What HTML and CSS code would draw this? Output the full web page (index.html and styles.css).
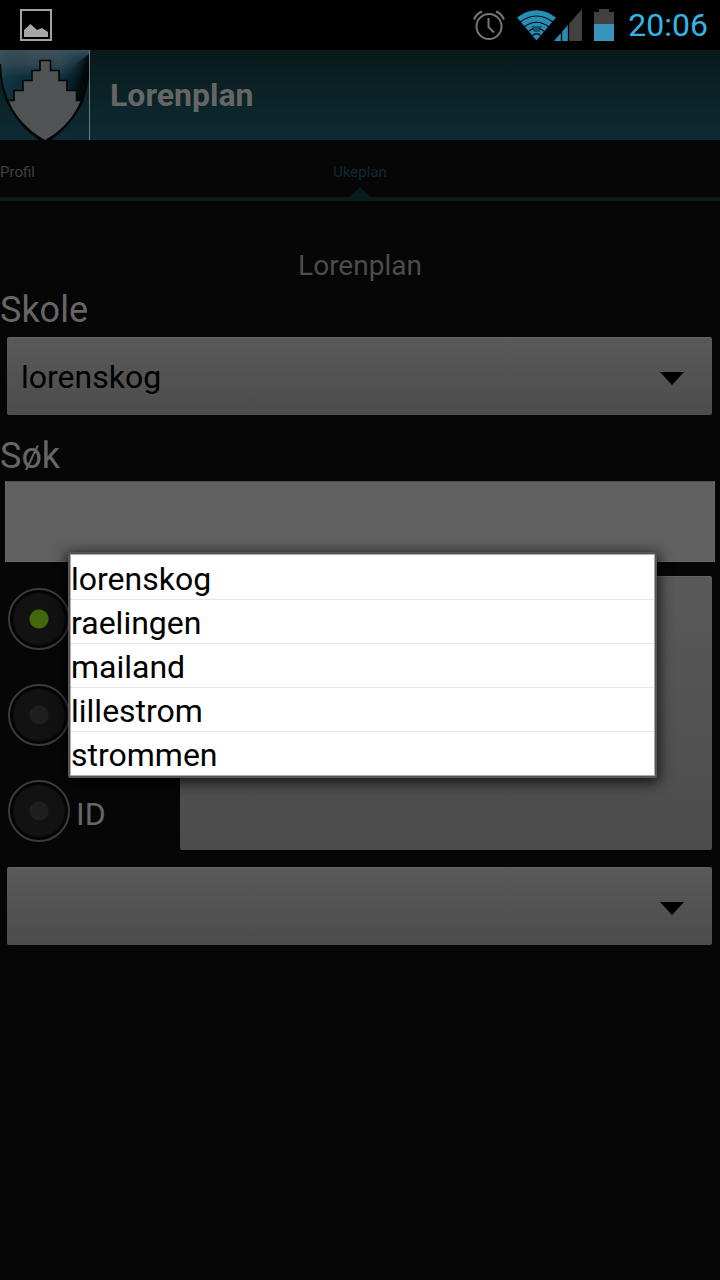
FILE: index.html
```html
<!DOCTYPE html>
<html lang="no">
<head>
<meta charset="utf-8">
<meta name="viewport" content="width=device-width, initial-scale=1">
<title>Lorenplan</title>
<link rel="stylesheet" href="styles.css">
</head>
<body>
<div class="status">
  <svg class="status-photo" width="32" height="32" viewBox="0 0 32 32" aria-hidden="true">
    <rect x="1" y="1" width="30" height="30" fill="none" stroke="#a3a3a3" stroke-width="2"/>
    <path d="M4 28V21L10.500 15L17 21L22 19L28 23V28Z" fill="#a8a8a8"/>
  </svg>
  <div class="status-icons">
    <svg width="32" height="32" viewBox="0 0 32 32" fill="none" stroke="#777" stroke-width="2" aria-hidden="true">
      <circle cx="16" cy="17.500" r="12.500"/>
      <path d="M15.500 9V18L21 23.500M1 10.500Q3.500 4.500 9 2.500M31 10.500Q28.500 4.500 23 2.500"/>
    </svg>
    <svg class="status-signal" width="72" height="32" viewBox="0 0 72 32" aria-hidden="true">
      <path d="M0 8.500Q19.500-6 39 8.500L19.500 31.500Z" fill="#278db5"/>
      <path d="M14.500 17H25L22.500 23H17Z" fill="#17556d"/>
      <path d="M3 13Q19.500 1 36 13M7 18Q19.500 8.500 32 18M11.500 22.500Q14 20.500 16.500 19.500M22.500 19.500Q25 20.500 27.500 22.500M15.500 26.500Q19.500 22.500 23.500 26.500" fill="none" stroke="#000" stroke-width="1.200"/>
      <path d="M65 0V32H37Z" fill="#414141"/>
      <path d="M51 16V32H37Z" fill="#278db5"/>
      <path d="M44.500 22V32M51.500 14V32" stroke="#000" stroke-width="1.300"/>
    </svg>
    <svg class="status-battery" width="20" height="32" viewBox="0 0 20 32" aria-hidden="true">
      <path d="M0 3H5V0H15V3H20V32H0Z" fill="#414141"/>
      <path d="M0 15H20V32H0Z" fill="#3994bb"/>
    </svg>
    <time class="clock">20:06</time>
  </div>
</div>

<header class="appbar">
  <svg class="crest" width="90" height="90" viewBox="0 0 90 90" aria-hidden="true">
    <defs>
      <linearGradient id="field" x1="0" y1="0" x2="0" y2="1">
        <stop offset="0" stop-color="#40515a"/>
        <stop offset=".16" stop-color="#2e464f"/>
        <stop offset=".3" stop-color="#0c303c"/>
        <stop offset="1" stop-color="#0a2a34"/>
      </linearGradient>
      <linearGradient id="shade" x1="0" y1="0" x2="1" y2=".25">
        <stop offset="0" stop-color="#36535e" stop-opacity=".5"/>
        <stop offset=".35" stop-color="#0a2b36" stop-opacity="0"/>
        <stop offset=".7" stop-color="#06222c" stop-opacity="0"/>
        <stop offset=".95" stop-color="#010709" stop-opacity=".95"/>
      </linearGradient>
      <linearGradient id="gloss" x1="0" y1="0" x2="0" y2="1">
        <stop offset="0" stop-color="#35535f"/>
        <stop offset="1" stop-color="#123642" stop-opacity="0"/>
      </linearGradient>
    </defs>
    <path d="M0 0H89V14Q88 64 45 91Q1 64 0 14Z" fill="url(#field)"/>
    <path d="M0 0H89V14Q88 64 45 91Q1 64 0 14Z" fill="url(#shade)"/>
    <path d="M60 0H89V4L66 22Z" fill="url(#gloss)"/>
    <path d="M7 50.500H14V40.500H23V30.500H32V20.500H40V10.500H50.500V20.500H59V30.500H67V40.500H76.500V50.500H83Q71 76 45 91Q19 76 7 50.500Z" fill="#4f5354" stroke="#030607" stroke-width="1.600"/>
    <path d="M0 14Q1 64 42 91M48 91Q88 64 89 14" fill="none" stroke="#020506" stroke-width="2"/>
    <path d="M89.500 0V90" stroke="#707a7c"/>
  </svg>
  <h1 class="appbar-title">Lorenplan</h1>
</header>

<nav class="tabs">
  <a class="tab" href="#profil">Profil</a>
  <a class="tab tab-active" href="#ukeplan" aria-current="page">Ukeplan</a>
</nav>

<main class="form">
  <h2 class="form-title">Lorenplan</h2>
  <label class="field-label" for="skole">Skole</label>
  <div class="spinner">
    <select class="spinner-select" id="skole">
      <option>lorenskog</option>
      <option>raelingen</option>
      <option>mailand</option>
      <option>lillestrom</option>
      <option>strommen</option>
    </select>
  </div>
  <label class="field-label field-label-search" for="sok">Søk</label>
  <input class="search" id="sok" type="text">
  <div class="criteria">
    <div class="radios">
      <input class="radio" type="radio" name="criterion" aria-label="Navn" checked>
      <input class="radio" type="radio" name="criterion" aria-label="Klasse">
      <div class="radio-row">
        <input class="radio" id="criterion-id" type="radio" name="criterion">
        <label class="radio-label" for="criterion-id">ID</label>
      </div>
    </div>
    <button class="submit" type="button" aria-label="Søk"></button>
  </div>
  <div class="spinner">
    <select class="spinner-select" aria-label="Resultat"></select>
  </div>
</main>

<div class="overlay">
  <ul class="menu">
    <li class="menu-row"><button class="menu-item" type="button">lorenskog</button></li>
    <li class="menu-row"><button class="menu-item" type="button">raelingen</button></li>
    <li class="menu-row"><button class="menu-item" type="button">mailand</button></li>
    <li class="menu-row"><button class="menu-item" type="button">lillestrom</button></li>
    <li class="menu-row"><button class="menu-item" type="button">strommen</button></li>
  </ul>
</div>
</body>
</html>
```
FILE: styles.css
```css
* { box-sizing: border-box; }

body {
  margin: 0;
  min-height: 100vh;
  background: #060606;
  color: #666;
  font-family: Roboto, "Liberation Sans", sans-serif;
}

h1, h2 { margin: 0; }

button, input, select { font: inherit; }

.status {
  display: flex;
  justify-content: space-between;
  align-items: center;
  height: 50px;
  padding: 0 12px 0 20px;
  background: #000;
}

.status-icons { display: flex; align-items: center; }
.status-signal { margin-left: 12px; }
.status-battery { margin-left: 5px; }

.clock {
  margin-left: 14px;
  color: #33b5e5;
  font-size: 32px;
  line-height: 40px;
}

.appbar {
  display: flex;
  align-items: center;
  gap: 20px;
  height: 90px;
  background: linear-gradient(#081a1a, #0d2b34);
}

.appbar-title {
  font-size: 32px;
  line-height: 40px;
  font-weight: 700;
}

.tabs {
  display: grid;
  grid-template-columns: 1fr auto 1fr;
  height: 61px;
  border-bottom: 4px solid #081c1c;
}

.tab {
  padding-top: 22px;
  color: #404040;
  font-size: 15px;
  line-height: 20px;
  text-decoration: none;
}

.tab-active {
  display: flex;
  flex-direction: column;
  justify-content: space-between;
  align-items: center;
  color: #0c2a33;
}

.tab-active::after {
  content: "";
  width: 20px;
  height: 10px;
  background: #081c1c;
  clip-path: polygon(50% 0, 100% 100%, 0 100%);
}

.form { padding-top: 49px; }

.form-title {
  margin-bottom: 6px;
  color: #4c4c4c;
  font-size: 28px;
  line-height: 32px;
  font-weight: 400;
  text-align: center;
}

.field-label {
  display: block;
  margin-bottom: 5px;
  font-size: 36px;
  line-height: 44px;
}

.field-label-search { margin: 19px 0 3px; }

.spinner {
  position: relative;
  margin: 0 8px 0 7px;
}

.spinner::after {
  content: "";
  position: absolute;
  top: 35px;
  right: 28px;
  width: 24px;
  height: 13px;
  background: #000;
  clip-path: polygon(0 0, 100% 0, 50% 100%);
  pointer-events: none;
}

.spinner-select {
  display: block;
  width: 100%;
  height: 78px;
  padding: 0 60px 0 14px;
  border: 0;
  border-top: 1px solid #636363;
  border-radius: 2px;
  appearance: none;
  background: linear-gradient(#595959, #4c4c4c);
  color: #000;
  font-size: 32px;
}

.search {
  display: block;
  width: calc(100% - 10px);
  height: 81px;
  margin: 0 5px;
  padding: 0 14px;
  border: 1px solid #696969;
  border-top-color: #505050;
  background: #606060;
  color: #000;
  font-size: 32px;
}

.criteria {
  display: flex;
  justify-content: space-between;
  height: 274px;
  margin: 14px 8px 17px;
}

.radios {
  display: flex;
  flex-direction: column;
  gap: 34px;
  padding-top: 12px;
}

.radio-row {
  display: flex;
  align-items: center;
  gap: 6px;
}

.radio-label {
  padding-top: 6px;
  font-size: 32px;
  line-height: 40px;
}

.radio {
  flex: none;
  width: 62px;
  height: 62px;
  margin: 0;
  border: 2px solid #3b3b3b;
  border-radius: 50%;
  appearance: none;
  background: radial-gradient(circle, #1f1f1f 9px, #121212 10px, #121212 25px, #030303 27px);
}

.radio:checked {
  background: radial-gradient(circle, #43680c 9px, #121212 10px, #121212 25px, #030303 27px);
}

.submit {
  width: calc(100% - 172px);
  border: 0;
  border-top: 1px solid #636363;
  border-radius: 2px;
  background: linear-gradient(#595959, #4c4c4c);
}

.overlay {
  position: absolute;
  inset: 50px 0 0;
  display: flex;
  align-items: center;
}

.menu {
  flex: 1;
  margin: 0 63px 0 68px;
  padding: 1px 0;
  border: 2px solid #555;
  outline: 1px solid #aaa;
  outline-offset: -3px;
  border-radius: 2px;
  background: #fff;
  box-shadow: 0 3px 14px 2px #000b;
  list-style: none;
}

.menu-row + .menu-row { border-top: 1px solid #e6e6e6; }

.menu-item {
  display: block;
  width: 100%;
  height: 44px;
  padding: 4px 1px 0;
  border: 0;
  background: none;
  color: #000;
  font-size: 32px;
  line-height: 40px;
  text-align: left;
}

.menu-row + .menu-row .menu-item {
  height: 43px;
  padding-top: 3px;
}
```
